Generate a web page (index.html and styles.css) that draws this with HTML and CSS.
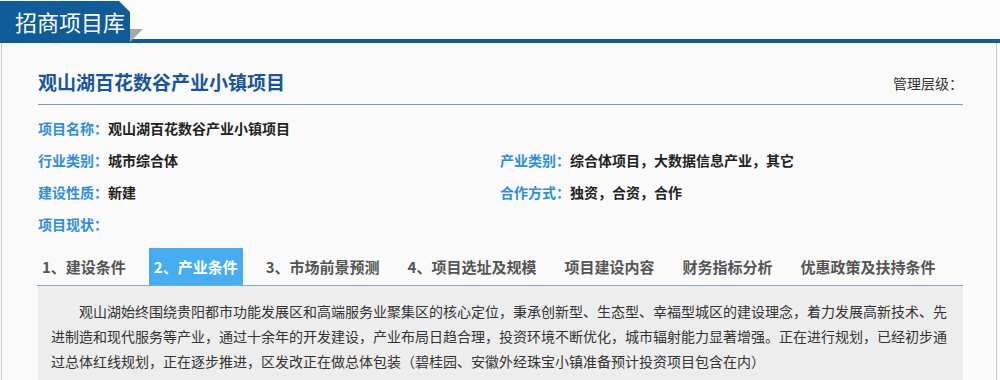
FILE: index.html
```html
<!DOCTYPE html>
<html lang="zh-CN">
  <head>
    <meta charset="UTF-8" />
    <title>招商项目库</title>
    <link rel="stylesheet" href="styles.css">
  </head>
  <body>
    <!-- 顶部标题栏 -->
    <div class="page-head">
      <div class="head-tab">招商项目库</div>
    </div>

    <div class="panel">
      <div class="title-row">
        <h1>观山湖百花数谷产业小镇项目</h1>
        <span class="level">管理层级：</span>
      </div>

      <!-- 项目基本信息 -->
      <div class="info">
        <div class="info-item"><span class="label">项目名称：</span>观山湖百花数谷产业小镇项目</div>
        <div class="info-item"></div>
        <div class="info-item"><span class="label">行业类别：</span>城市综合体</div>
        <div class="info-item"><span class="label">产业类别：</span>综合体项目，大数据信息产业，其它</div>
        <div class="info-item"><span class="label">建设性质：</span>新建</div>
        <div class="info-item"><span class="label">合作方式：</span>独资，合资，合作</div>
        <div class="info-item"><span class="label">项目现状：</span></div>
      </div>

      <!-- 选项卡 -->
      <ul class="tabs">
        <li>1、建设条件</li>
        <li class="active">2、产业条件</li>
        <li>3、市场前景预测</li>
        <li>4、项目选址及规模</li>
        <li>项目建设内容</li>
        <li>财务指标分析</li>
        <li>优惠政策及扶持条件</li>
      </ul>
      <div class="tab-body">
        <p>观山湖始终围绕贵阳都市功能发展区和高端服务业聚集区的核心定位，秉承创新型、生态型、幸福型城区的建设理念，着力发展高新技术、先进制造和现代服务等产业，通过十余年的开发建设，产业布局日趋合理，投资环境不断优化，城市辐射能力显著增强。正在进行规划，已经初步通过总体红线规划，正在逐步推进，区发改正在做总体包装（碧桂园、安徽外经珠宝小镇准备预计投资项目包含在内）</p>
      </div>
    </div>
  </body>
</html>
```

FILE: styles.css
```css
body {
  margin: 0;
  padding: 0;
  background: #fcfcfc;
  font-family: "Microsoft YaHei", "Noto Sans CJK SC", sans-serif;
  font-size: 14px;
  color: #333;
  height: 100vh;
  display: flex;
  flex-direction: column;
  overflow: hidden;
}

.page-head {
  height: 38px;
  padding-top: 1px;
  border-bottom: 4px solid #0f5c99;
  display: flex;
  flex-shrink: 0;
}

.head-tab {
  width: 115px;
  padding-left: 15px;
  background: #0f5c99;
  color: white;
  font-size: 22px;
  line-height: 40px;
  clip-path: polygon(0 0, 119px 0, 130px 11px, 130px 100%, 0 100%);
}

/* 折角 */
.page-head::after {
  content: "";
  display: block;
  margin-top: 28px;
  width: 0;
  height: 0;
  border-top: 13px solid #a8a8a8;
  border-right: 13px solid transparent;
}

.panel {
  flex: 1;
  min-height: 0;
  display: flex;
  flex-direction: column;
  margin-left: 1px;
  width: 958px;
  padding: 0 0 0 36px;
  background: #fafafa;
  border-left: 1px solid #c9c9c9;
  border-right: 1px solid #c9c9c9;
}

.title-row {
  display: flex;
  justify-content: space-between;
  align-items: center;
  width: 925px;
  padding-top: 24px;
  padding-bottom: 7px;
  border-bottom: 1px solid #7d9cbd;
}

h1 {
  margin: 0;
  font-size: 19px;
  line-height: 30px;
  color: #18569a;
  font-weight: bold;
}

.level {
  color: #333;
  margin-top: 2px;
}

.info {
  display: grid;
  grid-template-columns: 462px 1fr;
  margin-top: 7px;
  width: 925px;
}

.info-item {
  line-height: 32px;
  height: 32px;
  color: #222;
  font-weight: 600;
}

.label {
  color: #2f8edb;
}

.tabs {
  list-style: none;
  display: flex;
  margin: 8px 0 0 -1px;
  padding: 0;
  width: 926px;
  border-bottom: 1px solid #79a9d6;
}

.tabs li {
  flex-shrink: 0;
  white-space: nowrap;
  padding: 0 5px;
  margin-right: 18px;
  font-size: 15px;
  line-height: 37px;
  font-weight: bold;
  color: #555;
}

.tabs li:last-child {
  margin-right: 0;
}

.tabs li.active {
  background: #46adf3;
  color: white;
}

.tab-body {
  flex: 1;
  min-height: 0;
  overflow: hidden;
  width: 899px;
  padding: 13px;
  background: #ededed;
}

.tab-body p {
  margin: 0;
  text-indent: 2em;
  line-height: 25px;
  color: #333;
}
```
